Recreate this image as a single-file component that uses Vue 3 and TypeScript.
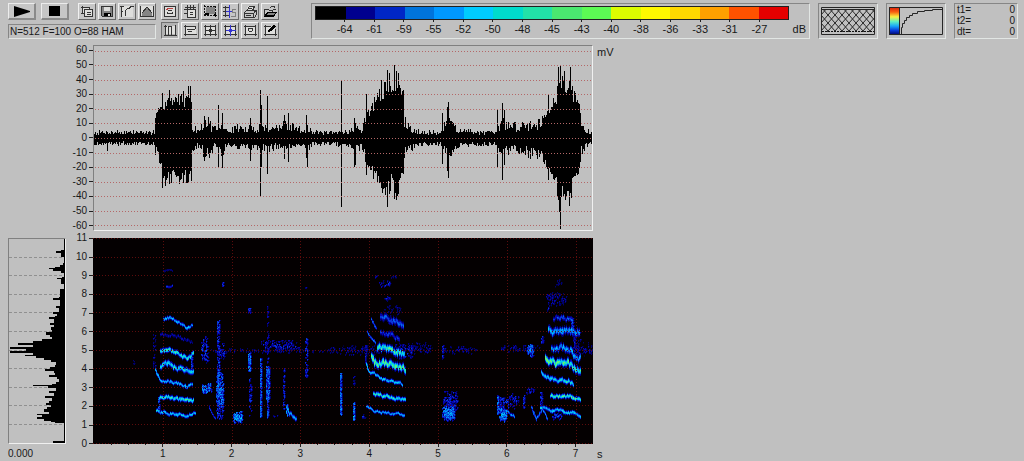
<script setup lang="ts">
type Point = [number, number]
type Ridge = { pts: Point[]; power: number; thick: number }
type Cloud = [x0: number, y0: number, x1: number, y1: number, density: number, power: number]

const swatches: string[] = [
  '#000000', '#00008e', '#0026c6', '#0074dc', '#0098ff', '#00ccff', '#00dccc', '#22e2a8',
  '#4ae870', '#5cfa54', '#dcfc00', '#fff800', '#ffd800', '#ffa000', '#ff5200', '#e40000',
]
const levels = [-64, -61, -59, -55, -52, -50, -48, -45, -43, -40, -38, -36, -33, -31, -27]
const millivolts = [60, 50, 40, 30, 20, 10, 0, -10, -20, -30, -40, -50, -60]
const kilohertz = [11, 10, 9, 8, 7, 6, 5, 4, 3, 2, 1, 0]
const seconds = [1, 2, 3, 4, 5, 6, 7]
const quarters = Array.from({ length: 28 }, (_, i) => (i + 1) / 4)
const timeAt = (t: number): string => `${((t * 68.8 + 1) / 500) * 100}%`

const fileTools = ['Copy', 'Save', 'Transfer curve', 'Spectrum']
const viewTools = [
  'Frame', 'Paste frame', 'Select area', 'Cursor', 'Print', 'Open',
  'Columns', 'Rows', 'Grid', 'Blue grid', 'Marker', 'Edit',
]
const readouts = ['t1', 't2', 'dt']

function makeRandom(seed: number): () => number {
  let s = seed
  return () => {
    s = (s * 1664525 + 1013904223) >>> 0
    return s / 4294967296
  }
}

/* Oscillogram: envelope knots as [sample, positive mV, negative mV] */
const envelope: [number, number, number][] = [
  [0, 5, 4], [30, 5, 4], [60, 5, 4], [61, 14, 10], [65, 20, 17], [67, 26, 22], [70, 28, 31], [75, 32, 33],
  [79, 26, 30], [84, 33, 32], [90, 31, 31], [95, 36, 29], [97, 34, 28], [98, 11, 12], [101, 8, 7],
  [106, 7, 6], [110, 14, 13], [115, 14, 13], [118, 8, 9], [122, 7, 5], [126, 10, 10], [128, 15, 15],
  [131, 6, 6], [139, 7, 5], [143, 10, 10], [149, 7, 6], [154, 7, 6], [156, 10, 9], [160, 7, 5], [165, 10, 8],
  [176, 9, 8], [185, 9, 6], [190, 11, 9], [200, 9, 7], [210, 6, 5], [213, 10, 9], [218, 5, 4], [240, 4, 4],
  [248, 6, 6], [256, 6, 5], [261, 9, 9], [268, 6, 7], [271, 16, 16], [274, 21, 20], [280, 27, 29],
  [286, 35, 37], [293, 39, 39], [297, 39, 35], [300, 43, 42], [304, 42, 37], [309, 32, 28], [310, 14, 12],
  [316, 8, 8], [326, 6, 5], [346, 4, 4], [350, 10, 9], [354, 17, 14], [361, 9, 9], [366, 6, 5],
  [376, 6, 5], [402, 4, 4], [404, 10, 9], [410, 13, 13], [416, 11, 10], [422, 10, 9], [429, 11, 11],
  [436, 12, 12], [442, 11, 12], [449, 17, 16], [454, 24, 24], [459, 29, 31], [463, 35, 40], [467, 45, 42],
  [472, 45, 40], [477, 40, 39], [481, 31, 30], [485, 27, 22], [487, 11, 10], [492, 6, 6], [498, 4, 3],
]
const bursts: Record<number, [number, number]> = {
  13: [4, 8], 68: [31, 34], 75: [33, 31], 94: [36, 30], 110: [15, 15], 124: [23, 20], 128: [17, 20],
  156: [14, 15], 166: [33, 39], 167: [23, 19], 173: [29, 24], 190: [16, 14], 194: [17, 16], 212: [16, 13],
  213: [9, 19], 247: [40, 47], 260: [14, 19], 261: [10, 18], 272: [30, 25], 287: [40, 34], 293: [47, 47],
  295: [45, 38], 300: [50, 41], 302: [46, 42], 304: [45, 38], 348: [17, 17], 353: [21, 22], 354: [25, 27],
  403: [20, 20], 408: [24, 28], 410: [19, 18], 436: [12, 14], 454: [30, 28], 464: [49, 42], 466: [50, 62],
  465: [38, 50], 470: [46, 38], 475: [40, 46], 476: [49, 37],
}
function waveform(): string {
  const rand = makeRandom(7)
  let d = ''
  let k = 0
  for (let i = 0; i <= 497; i++) {
    while (k < envelope.length - 2 && envelope[k + 1][0] <= i) k++
    const a = envelope[k]
    const b = envelope[k + 1]
    const f = (i - a[0]) / (b[0] - a[0])
    const floor = a[1] < 16 ? 0.42 : 0.68
    const span = a[1] < 16 ? 0.7 : 0.36
    let up = (a[1] + (b[1] - a[1]) * f) * (floor + rand() * span)
    let down = (a[2] + (b[2] - a[2]) * f) * (floor + rand() * span)
    const burst = bursts[i]
    if (burst) [up, down] = burst
    const top = Math.round(93 - up * 1.455)
    const bottom = Math.round(94 + down * 1.455)
    d += `M${i + 1} ${top}h1V${bottom}h-1z`
  }
  return d
}

/* Average spectrum: [row, bar length], each held until the next row */
const spectrumSteps: Point[] = [
  [0, 0], [12, 3], [13, 8], [15, 3], [19, 0], [25, 1], [27, 4], [29, 9], [30, 15], [31, 11], [33, 3],
  [35, 0], [39, 2], [40, 7], [41, 3], [46, 0], [51, 4], [59, 5], [60, 11], [62, 4], [68, 8], [70, 5],
  [74, 11], [76, 7], [78, 9], [79, 15], [81, 10], [85, 14], [87, 10], [89, 13], [92, 12], [94, 18],
  [97, 14], [99, 12], [101, 22], [103, 31], [105, 46], [107, 31], [109, 54], [111, 38], [113, 54],
  [115, 31], [117, 39], [118, 28], [120, 20], [122, 13], [124, 8], [127, 9], [129, 14], [131, 19],
  [133, 10], [135, 9], [137, 15], [139, 7], [141, 5], [144, 8], [146, 12], [147, 31], [148, 16],
  [150, 8], [153, 15], [155, 10], [158, 19], [160, 12], [163, 15], [165, 18], [167, 13], [169, 17],
  [171, 20], [174, 15], [176, 27], [177, 22], [179, 27], [181, 20], [183, 13], [184, 9], [185, 0],
  [203, 11], [205, 0],
]
const spectrum = spectrumSteps
  .slice(0, -1)
  .map(([y, len], i) => (len ? `M56 ${y}h-${len}v${spectrumSteps[i + 1][0] - y}h${len}z` : ''))
  .join('')

/* Sonogram */
const palette = ['#000030', '#00006c', '#0606ac', '#0838d8', '#0070e8', '#00a0f8', '#00ccf0', '#20e0b8', '#60f078']

const ridges: Ridge[] = [
  { pts: [[70, 81], [77, 79], [84, 84], [89, 86], [94, 90], [99, 86]], power: 0.62, thick: 1 },
  { pts: [[67, 97], [79, 96], [87, 99], [99, 104]], power: 0.24, thick: 1 },
  { pts: [[67, 113], [75, 112], [82, 114], [89, 118], [94, 120], [100, 115]], power: 0.8, thick: 1.3 },
  { pts: [[67, 128], [74, 125], [80, 128], [90, 132], [100, 131]], power: 0.76, thick: 1.5 },
  { pts: [[62, 132], [64, 135], [67, 142], [77, 143], [84, 145], [92, 148], [99, 146]], power: 0.65, thick: 1 },
  { pts: [[66, 159], [77, 159], [87, 161], [100, 162]], power: 0.83, thick: 1.2 },
  { pts: [[63, 173], [70, 174], [84, 176], [94, 177], [102, 174]], power: 0.67, thick: 1 },
  { pts: [[70, 32], [79, 32]], power: 0.22, thick: 0.7 },
  { pts: [[73, 48], [79, 47]], power: 0.35, thick: 0.8 },
  { pts: [[193, 169], [196, 174], [203, 180]], power: 0.6, thick: 1.3 },
  { pts: [[116, 168], [120, 178], [122, 180]], power: 0.35, thick: 0.8 },
  { pts: [[287, 78], [295, 79], [304, 84], [310, 86]], power: 0.45, thick: 2 },
  { pts: [[274, 94], [282, 105]], power: 0.5, thick: 0.9 },
  { pts: [[278, 81], [283, 90]], power: 0.45, thick: 0.9 },
  { pts: [[287, 95], [295, 96], [306, 101]], power: 0.36, thick: 1.5 },
  { pts: [[284, 108], [295, 111], [304, 114], [311, 116]], power: 0.84, thick: 2 },
  { pts: [[278, 117], [282, 124], [292, 125], [302, 128], [312, 131]], power: 0.92, thick: 2 },
  { pts: [[273, 125], [275, 132], [282, 136], [289, 141], [299, 143], [309, 146]], power: 0.68, thick: 1 },
  { pts: [[280, 154], [285, 157], [299, 159], [312, 161]], power: 0.82, thick: 1.2 },
  { pts: [[273, 168], [282, 173], [295, 175], [311, 176]], power: 0.63, thick: 0.9 },
  { pts: [[405, 170], [413, 172], [421, 178]], power: 0.55, thick: 1 },
  { pts: [[438, 169], [443, 180], [449, 171], [454, 179]], power: 0.5, thick: 1 },
  { pts: [[448, 134], [457, 140], [469, 142], [475, 142], [480, 147]], power: 0.73, thick: 1.3 },
  { pts: [[452, 121], [462, 124], [474, 124], [479, 128], [487, 134]], power: 0.92, thick: 2 },
  { pts: [[457, 158], [470, 157], [479, 159], [487, 162]], power: 0.82, thick: 1.2 },
  { pts: [[447, 170], [459, 172], [470, 173], [480, 175], [487, 178]], power: 0.68, thick: 1.1 },
  { pts: [[455, 89], [459, 94], [469, 91], [479, 93], [486, 93]], power: 0.6, thick: 2 },
  { pts: [[458, 110], [470, 109], [478, 112], [480, 119], [487, 120]], power: 0.6, thick: 1.8 },
  { pts: [[460, 80], [467, 80], [470, 79], [479, 81]], power: 0.4, thick: 1.4 },
]
const clouds: Cloud[] = [
  [65, 158, 67, 174, 0.8, 0.45], [98, 114, 100, 132, 0.8, 0.4], [60, 95, 63, 130, 0.2, 0.25],
  [40, 119, 42, 126, 0.5, 0.18], [129, 43, 131, 48, 0.7, 0.4], [108, 97, 116, 126, 0.5, 0.42],
  [108, 145, 119, 156, 0.75, 0.6], [124, 82, 127, 178, 0.5, 0.4], [123, 130, 131, 181, 0.6, 0.55],
  [126, 104, 132, 122, 0.5, 0.4], [140, 173, 150, 185, 0.9, 0.68], [155, 114, 158, 133, 0.7, 0.55],
  [156, 140, 159, 178, 0.35, 0.35], [155, 69, 158, 75, 0.6, 0.35], [167, 120, 169, 179, 0.75, 0.5],
  [174, 66, 176, 130, 0.3, 0.3], [173, 128, 177, 161, 0.75, 0.5], [174, 161, 176, 180, 0.6, 0.45],
  [190, 130, 192, 172, 0.4, 0.35], [165, 102, 207, 113, 0.42, 0.35], [104, 110, 240, 115, 0.22, 0.23],
  [212, 100, 215, 140, 0.45, 0.38], [180, 177, 186, 179, 0.4, 0.35], [193, 166, 195, 178, 0.7, 0.6],
  [212, 48, 214, 52, 0.5, 0.25], [286, 42, 298, 49, 0.5, 0.36], [282, 37, 285, 41, 0.5, 0.25],
  [291, 58, 298, 63, 0.6, 0.3], [298, 37, 306, 40, 0.3, 0.2], [303, 69, 309, 72, 0.35, 0.25],
  [232, 107, 290, 117, 0.23, 0.25], [302, 104, 322, 122, 0.3, 0.32], [316, 104, 340, 116, 0.2, 0.25],
  [349, 108, 384, 116, 0.25, 0.26], [247, 135, 249, 177, 0.75, 0.5], [260, 164, 262, 182, 0.9, 0.6],
  [260, 137, 262, 147, 0.5, 0.3], [269, 176, 274, 180, 0.6, 0.4], [272, 107, 274, 125, 0.6, 0.35],
  [350, 153, 366, 174, 0.48, 0.38], [349, 167, 362, 183, 0.95, 0.6], [349, 107, 351, 121, 0.5, 0.35],
  [404, 157, 406, 177, 0.75, 0.5], [406, 172, 414, 184, 0.9, 0.64], [406, 155, 418, 172, 0.45, 0.4],
  [416, 155, 426, 171, 0.35, 0.35], [430, 157, 432, 170, 0.7, 0.4], [447, 154, 450, 170, 0.5, 0.35],
  [404, 107, 450, 114, 0.25, 0.25], [434, 105, 441, 119, 0.9, 0.55], [433, 149, 442, 156, 0.5, 0.35],
  [453, 54, 474, 68, 0.34, 0.28], [459, 175, 470, 182, 0.6, 0.42], [477, 80, 481, 98, 0.5, 0.45],
  [480, 104, 500, 118, 0.22, 0.26], [448, 98, 451, 105, 0.6, 0.4], [462, 41, 470, 49, 0.3, 0.18],
  [454, 69, 456, 73, 0.5, 0.3], [290, 64, 309, 78, 0.12, 0.2], [480, 92, 488, 118, 0.3, 0.32],
]
function sonogram(): { color: string; d: string }[] {
  const w = 500
  const h = 206
  const rand = makeRandom(42)
  const grid = new Float32Array(w * h)
  const put = (x: number, y: number, v: number): void => {
    if (x < 0 || y < 0 || x >= w || y >= h) return
    const i = y * w + x
    grid[i] = Math.max(grid[i], v)
  }
  for (const { pts, power, thick } of ridges) {
    const spread = thick * 1.35
    let drift = 0
    for (let s = 0; s < pts.length - 1; s++) {
      const [xa, ya] = pts[s]
      const [xb, yb] = pts[s + 1]
      const steps = Math.max(Math.abs(xb - xa), Math.abs(yb - ya))
      for (let n = 0; n <= steps; n++) {
        drift = drift * 0.5 + (rand() - 0.5) * thick * 2
        const x = Math.round(xa + ((xb - xa) * n) / steps)
        const y = ya + ((yb - ya) * n) / steps + drift
        const strength = power * (0.8 + rand() * 0.35)
        for (let dy = -5; dy <= 5; dy++) {
          const row = Math.round(y) + dy
          const dist = (row - y) / spread
          put(x, row, strength * Math.exp(-dist * dist * 0.7) * (0.85 + rand() * 0.2))
        }
      }
    }
  }
  for (const [x0, y0, x1, y1, density, power] of clouds) {
    const cx = (x0 + x1 - 1) / 2
    const cy = (y0 + y1 - 1) / 2
    const round = x1 - x0 > 4
    for (let y = y0; y < y1; y++) {
      for (let x = x0; x < x1; x++) {
        const u = (x - cx) / (x1 - x0)
        const v = (y - cy) / (y1 - y0)
        const fade = round ? Math.max(0, 1 - 2.6 * (u * u * u * u * 4 + v * v)) : 1
        if (rand() < density * fade) {
          const p = power * (0.5 + rand() * 0.6) * (0.6 + fade * 0.4)
          put(x, y, p)
          put(x, y + 1, p * 0.7)
          put(x + 1, y, p * 0.4)
        }
      }
    }
  }
  const paths = palette.map(() => '')
  for (let y = 0; y < h; y++) {
    for (let x = 0; x < w; x++) {
      const v = grid[y * w + x]
      if (v < 0.06) continue
      const level = Math.min(palette.length - 1, Math.floor(v * 9.6))
      paths[level] += `M${x} ${y}h1v1h-1z`
    }
  }
  return palette.map((color, i) => ({ color, d: paths[i] }))
}

const wave = waveform()
const sono = sonogram()
const rowAt = (k: number): number => Math.round((11 - k) * 18.6) + 0.5
</script>

<template>
  <div class="analyzer">
    <header class="toolbar">
      <div class="transport">
        <div class="transport-buttons">
          <button class="key wide" type="button" aria-label="Play">
            <svg width="16" height="11" viewBox="0 0 16 11"><path d="M0 0L16 5v1L0 11z" /></svg>
          </button>
          <button class="key wide" type="button" aria-label="Stop">
            <svg width="11" height="10" viewBox="0 0 11 10"><path d="M0 0h11v10H0z" /></svg>
          </button>
          <div class="file-tools">
            <button v-for="(tool, i) in fileTools" :key="tool" class="key" type="button" :aria-label="tool">
              <svg class="icon" viewBox="0 0 16 15">
                <g v-if="i === 0">
                  <path class="pale" d="M3 3h8v7H3zM6 6h8v7H6z" />
                  <path class="line" d="M2 3.500H11M3.500 2V10M2 9.500H6M10.500 3V5M5.500 5V13M5 5.500H14M13.500 5V13M5 12.500H14M8 8.500H12M8 10.500H12" />
                </g>
                <g v-else-if="i === 1">
                  <path class="dim" d="M2 2h12v11H3l-1-1z" />
                  <path class="pale" d="M5 3h6v4H5z" />
                  <path d="M5 9h7v4H5z" /><path class="pale" d="M9 10h2v3H9z" />
                  <path class="line" d="M2.500 2.500H13.500V12.500H3.500L2.500 11.500z" />
                </g>
                <g v-else-if="i === 2">
                  <path class="pale" d="M2 2h12v11H2z" />
                  <path class="line" d="M1 2.500H5M2.500 2V12.500M6.500 12V6.500L8.500 4.500H10M10 4.500L12 2.500H15M2 7.500H4" />
                </g>
                <g v-else>
                  <path class="pale" d="M2 2h12v10H2z" />
                  <path class="line" d="M1.500 2V12.500H15M14.500 2V13" />
                  <path class="dim" d="M3 12V9L8 3l5 6v3z" />
                  <path class="line" d="M3 9L8 3L13 9" />
                </g>
              </svg>
            </button>
          </div>
        </div>
        <output class="sunken settings">N=512 F=100 O=88 HAM</output>
      </div>

      <div class="view-tools">
        <button
          v-for="(tool, i) in viewTools"
          :key="tool"
          class="key"
          :class="{ pressed: i === 6 }"
          :aria-pressed="i === 6"
          type="button"
          :aria-label="tool"
        >
          <svg class="icon" viewBox="0 0 16 15">
            <g v-if="i === 0">
              <path class="pale" d="M3 2h10v10H3z" />
              <path class="line" d="M2 2.500H14M2.500 2V13M13.500 2V13M2 12.500H14M5 9.500H11M5.500 9V7.500M10.500 9V7.500M6 6.500H10" />
              <path class="red" d="M5 4.500H11M4 5.500H6" />
            </g>
            <g v-else-if="i === 1">
              <path class="pale" d="M6 6h8v7H6z" />
              <path class="line" d="M2 5.500H13.500V13.500H5.500V5M2 9.500H5M3 3.500H14M5.500 1V5M8.500 1V5M11.500 1V5M8 8.500H11M8 10.500H11" />
            </g>
            <g v-else-if="i === 2">
              <path class="dim" d="M4 3h9v7H4z" />
              <path class="dots" d="M2.500 1V13M2 2.500H14M2 11.500H15M13.500 2V13" />
              <path d="M3 9h4v2H3zM12 10h2v2h-2z" />
            </g>
            <g v-else-if="i === 3">
              <path class="line" d="M1 3.500H7M3.500 2V13M1 7.500H6M1 11.500H7" />
              <path class="dimline" d="M14 5.500H10.500V8.500H13.500V12.500H9" />
              <path class="blue" d="M7.500 1V14M4 7.500H10" />
            </g>
            <g v-else-if="i === 4">
              <path class="pale" d="M6 2h7l-2 5H4z" />
              <path class="line" d="M5 6.500L7.500 2.500H12.500L10.500 6.500M7 4.500H10M2.500 8.500L4.500 6.500H14.500V10.500L12.500 13.500H2.500z" />
              <path class="line" d="M2 9.500H11.500L14 6.500M11.500 9V13M4 11.500H9" />
            </g>
            <g v-else-if="i === 5">
              <path class="line" d="M2.500 12V5.500H6.500L7.500 6.500H10.500V8M8 3.500L10 2.500H12L13.500 4.500M11 5.500H14" />
              <path d="M2 13l3-5h10l-3 5z" /><path class="dim" d="M5 11l1-2h7l-1 2z" />
            </g>
            <g v-else-if="i === 6">
              <path class="pale" d="M3 3h10v8H3z" />
              <path class="line" d="M3.500 2V13M2 3.500H5M2 12.500H15M6.500 3V12M9.500 3V12M13.500 2V13M6 3.500H10" />
            </g>
            <g v-else-if="i === 7">
              <path class="pale" d="M4 3h10v8H4z" />
              <path class="line" d="M2 3.500H14M3.500 2V13M2 11.500H15M5 6.500H13M6 8.500H10M13.500 3V6" />
            </g>
            <g v-else-if="i === 8">
              <path class="pale" d="M3 3h10v8H3z" />
              <path class="line" d="M2 3.500H14M3.500 2V13M2 11.500H15M13.500 2V13M8.500 2V13M4 7.500H13M7 6.500H10M7 8.500H10" />
            </g>
            <g v-else-if="i === 9">
              <path class="pale" d="M3 3h10v8H3z" />
              <path class="line" d="M2 3.500H14M3.500 2V13M2 11.500H15M13.500 2V13" />
              <path class="blue" d="M8.500 2V13M4 7.500H14M7 6.500H10M7 8.500H10" />
            </g>
            <g v-else-if="i === 10">
              <path class="pale" d="M3 3h10v8H3z" />
              <path class="line" d="M2 3.500H14M3.500 2V13M2 11.500H15M13.500 2V13M6.500 5V8M10.500 5V8M7 8.500H10M6 5.500H11" />
            </g>
            <g v-else>
              <path class="pale" d="M3 3h10v8H3z" />
              <path class="line" d="M2 3.500H9M3.500 2V13M2 11.500H15M13.500 6V13" />
              <path d="M6 9l1-3 5-4 2 1-5 5z" />
            </g>
          </svg>
        </button>
      </div>

      <section class="sunken legend" aria-label="Level scale">
        <div class="legend-scale">
          <div class="swatches">
            <i v-for="c in swatches" :key="c" :style="{ background: c }"></i>
          </div>
          <div class="levels">
            <span v-for="l in levels" :key="l">{{ l }}</span>
          </div>
        </div>
        <span class="unit">dB</span>
      </section>

      <button class="sunken preview" type="button" aria-label="Window overlap">
        <svg viewBox="0 0 54 28">
          <defs>
            <pattern id="lattice" width="7" height="8" patternUnits="userSpaceOnUse">
              <path class="mesh" d="M0 0L7 8M7 0L0 8" />
            </pattern>
          </defs>
          <rect x="1" y="2" width="52" height="23" fill="url(#lattice)" />
          <path class="line" d="M.5.500H53.500V27.500H.5zM0 2.500H54" />
          <path class="dots" d="M1 24.500H53" />
        </svg>
      </button>

      <button class="sunken preview" type="button" aria-label="Colour curve">
        <svg viewBox="0 0 54 28">
          <defs>
            <linearGradient id="rainbow" x1="0" y1="0" x2="0" y2="1">
              <stop offset="0" stop-color="#d81808" />
              <stop offset=".18" stop-color="#f86010" />
              <stop offset=".35" stop-color="#f8f040" />
              <stop offset=".52" stop-color="#60f0c0" />
              <stop offset=".68" stop-color="#18a8f8" />
              <stop offset=".84" stop-color="#0838d8" />
              <stop offset="1" stop-color="#000060" />
            </linearGradient>
          </defs>
          <rect width="10" height="28" fill="url(#rainbow)" />
          <path class="line" d="M.5.500H53.500V27.500H.5zM10.500 0V28" />
          <path class="line" d="M12.500 27V20.500H13.500V16.500H15.500V13.500H17.500V10.500H20.500V8.500H23.500V6.500H28.500V4.500H35.500V3.500H43.500V2.500H53" />
        </svg>
      </button>

      <dl class="sunken cursors">
        <div v-for="r in readouts" :key="r">
          <dt>{{ r }}=</dt>
          <dd>0</dd>
        </div>
      </dl>
    </header>

    <main class="plots">
      <div class="axis volts">
        <span v-for="v in millivolts" :key="v">{{ v }}</span>
      </div>
      <svg class="plot wave" viewBox="1 1 498 184" preserveAspectRatio="none" role="img" aria-label="Oscillogram">
        <path :d="wave" />
        <path
          v-for="v in millivolts"
          :key="v"
          class="gridline"
          :d="`M2 ${Math.round(93 - v * 1.455) + 0.5}H498`"
        />
      </svg>
      <span class="side">mV</span>

      <svg class="plot histogram" viewBox="1 1 56 204" preserveAspectRatio="none" role="img" aria-label="Average spectrum">
        <path v-for="k in kilohertz" :key="k" class="guide" :d="`M1 ${rowAt(k)}H56`" />
        <path :d="spectrum" /><path d="M56 1h1v205h-1z" />
      </svg>
      <div class="axis hertz">
        <span v-for="k in kilohertz" :key="k">{{ k }}</span>
      </div>
      <svg class="plot sonogram" viewBox="0 0 500 206" preserveAspectRatio="none" role="img" aria-label="Sonogram">
        <path v-for="p in sono" :key="p.color" :d="p.d" :fill="p.color" />
        <path v-for="k in kilohertz" :key="k" class="reddots" :d="`M0 ${rowAt(k)}H500`" />
        <path v-for="s in seconds" :key="s" class="reddots" :d="`M${Math.round(s * 68.8) + 1.5} 0V206`" />
      </svg>

      <span class="reading">0.000</span>
      <svg class="time-axis" role="img" aria-label="Time axis">
        <line
          v-for="q in quarters"
          :key="q"
          :x1="timeAt(q)"
          :x2="timeAt(q)"
          y1="0"
          :y2="Number.isInteger(q) ? 3 : 1"
        />
        <text v-for="s in seconds" :key="s" :x="timeAt(s)" y="13">{{ s }}</text>
      </svg>
      <span class="side">s</span>
    </main>
  </div>
</template>

<style>
body {
  background: #c0c0c0;
}
</style>

<style scoped>
.analyzer {
  color: #181818;
  font: 11px/14px 'Liberation Sans', Arial, sans-serif;
}
.toolbar {
  display: flex;
  align-items: stretch;
  gap: 8px;
  padding: 3px 6px 6px 8px;
}
.sunken {
  box-sizing: border-box;
  border: 1px solid;
  border-color: #868686 #e2e6e4 #e2e6e4 #868686;
  background: none;
}
.transport {
  display: flex;
  flex-direction: column;
  justify-content: space-between;
  width: 148px;
  margin-right: -3px;
}
.transport-buttons {
  display: flex;
  justify-content: space-between;
}
.file-tools {
  display: flex;
  gap: 2px;
  margin-left: 5px;
}
.key {
  display: grid;
  place-items: center;
  box-sizing: border-box;
  width: 18px;
  height: 17px;
  padding: 0;
  border: 1px solid;
  border-color: #f0f0f0 #686868 #686868 #f0f0f0;
  background: #c6c6c6;
}
.wide {
  width: 28px;
  border-width: 1px 2px 2px 1px;
  border-color: #ececec #8a8a8a #8a8a8a #ececec;
}
.pressed {
  border-color: #707070 #e8e8e8 #e8e8e8 #707070;
  background: #b2b2b2;
}
.icon {
  width: 16px;
  height: 15px;
  shape-rendering: crispEdges;
}
.line,
.mesh {
  fill: none;
  stroke: #262626;
}
.icon .line {
  stroke: #343434;
}
.dots {
  fill: none;
  stroke: #111;
  stroke-dasharray: 2 1;
}
.dim {
  fill: #848484;
}
.dimline {
  fill: none;
  stroke: #808080;
}
.pale {
  fill: #dededc;
}
.red {
  fill: none;
  stroke: #b84040;
}
.blue {
  fill: none;
  stroke: #3434d0;
}
.settings {
  display: block;
  height: 15px;
  padding: 0 1px;
  font-size: 10px;
  line-height: 13px;
  white-space: nowrap;
}
.view-tools {
  display: grid;
  grid-template-columns: repeat(6, 18px);
  gap: 2px;
  margin-right: 24px;
}
.legend {
  display: flex;
  flex: 1;
  align-items: flex-end;
  justify-content: space-between;
  min-width: 0;
  padding: 2px 3px;
}
.legend-scale {
  flex: 1;
}
.swatches {
  display: flex;
  height: 12px;
  border: 1px solid #202020;
}
.swatches i {
  flex: 1;
}
.levels {
  display: flex;
  padding: 0 3.125%;
}
.levels span {
  flex: 1;
  text-align: center;
}
.levels span::before {
  display: block;
  width: 1px;
  height: 2px;
  margin: 0 auto;
  background: #202020;
  content: '';
}
.unit {
  width: 17px;
  text-align: right;
}
.preview {
  display: grid;
  place-items: center;
  width: 60px;
  padding: 0;
}
.preview svg {
  width: 54px;
  height: 28px;
}
.cursors {
  width: 64px;
  margin: 0;
  padding: 0 2px;
  font-size: 10px;
}
.cursors div {
  display: flex;
  justify-content: space-between;
  line-height: 11px;
}
.cursors dd {
  margin: 0;
}
.plots {
  display: grid;
  grid-template-columns: 58px 27px 500fr 431fr;
  grid-template-rows: 186px 206px 17px;
  row-gap: 7px;
  margin-left: 8px;
}
.plot {
  display: block;
  box-sizing: border-box;
  width: 100%;
  height: 100%;
  shape-rendering: crispEdges;
}
.wave,
.histogram {
  border: 1px solid;
  border-color: #808080 #f0f0f0 #f0f0f0 #808080;
}
.sonogram {
  background: #040001;
}
.gridline,
.reddots {
  fill: none;
  stroke: #b46868;
  stroke-dasharray: 1 2;
}
.reddots {
  stroke: #5c0c0c;
}
.guide {
  fill: none;
  stroke: #909090;
  stroke-dasharray: 3 2;
}
.axis {
  display: flex;
  flex-direction: column;
  font-size: 10px;
}
.axis span {
  display: flex;
  flex: 1;
  align-items: center;
  justify-content: flex-end;
  gap: 2px;
}
.axis span::after {
  width: 4px;
  height: 1px;
  background: #202020;
  content: '';
}
.volts {
  grid-column: 2;
  margin: -2px 0;
}
.hertz {
  margin: -9px 0;
}
.side {
  padding-left: 4px;
}
.reading,
.time-axis {
  margin-top: -7px;
}
.reading {
  grid-column: 1;
  grid-row: 3;
  padding-top: 3px;
  font-size: 10px;
}
.time-axis {
  grid-column: 3;
  width: 100%;
  height: 17px;
  font-size: 10px;
}
.time-axis line {
  stroke: #202020;
  shape-rendering: crispEdges;
}
.time-axis text {
  fill: #181818;
  text-anchor: middle;
}
.time-axis + .side {
  margin-top: -4px;
}
</style>
